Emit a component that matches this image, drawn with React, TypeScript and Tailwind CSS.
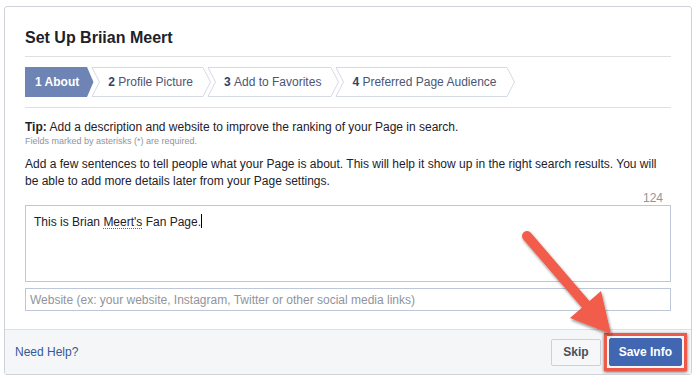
import React from "react";

const steps = [
  { n: "1", label: "About" },
  { n: "2", label: "Profile Picture" },
  { n: "3", label: "Add to Favorites" },
  { n: "4", label: "Preferred Page Audience" },
];

// chevron between two steps; the first one is filled when the step before is active
const Sep = ({ active, last }: { active?: boolean; last?: boolean }) => (
  <svg width={last ? 9 : 13} height="30" viewBox={last ? "0 0 9 30" : "0 0 13 30"} className="shrink-0 block">
    {active ? (
      <polygon points="0,0 6.5,15 0,30" fill="#6d84b4" />
    ) : (
      <polyline points="0,0.5 7.5,15 0,29.5" fill="none" stroke="#d5d9e3" />
    )}
    {!last && (
      <>
        <polyline points="5,0.5 12.5,15 5,29.5" fill="none" stroke="#d5d9e3" />
        <line x1="5" y1="0.5" x2="13" y2="0.5" stroke="#d5d9e3" />
        <line x1="5" y1="29.5" x2="13" y2="29.5" stroke="#d5d9e3" />
      </>
    )}
  </svg>
);

const Steps = () => (
  <div className="flex items-stretch h-[30px] text-[12px]">
    {steps.map((s, i) => {
      const active = i === 0;
      return (
        <React.Fragment key={s.n}>
          {active ? (
            <div className="flex items-center bg-[#6d84b4] text-white font-bold pl-[10px] pr-[8px]">
              {s.n} {s.label}
            </div>
          ) : (
            <div className="flex items-center border-y border-[#d5d9e3] text-[#4b5676] pl-[8px] pr-[10px] whitespace-nowrap">
              <span className="font-bold text-[#33406a]">{s.n}</span>&nbsp;{s.label}
            </div>
          )}
          <Sep active={active} last={i === steps.length - 1} />
        </React.Fragment>
      );
    })}
  </div>
);

const Arrow = () => (
  <svg className="absolute left-0 top-0 pointer-events-none" width="697" height="381">
    <defs>
      <filter id="sh" x="-20%" y="-20%" width="140%" height="140%">
        <feDropShadow dx="1" dy="2" stdDeviation="1.5" floodColor="#000" floodOpacity="0.45" />
      </filter>
    </defs>
    <g filter="url(#sh)">
      <line x1="527" y1="236" x2="588" y2="307" stroke="#f15b4c" strokeWidth="10" strokeLinecap="round" />
      <polygon points="570,318 601,291 611,334" fill="#f15b4c" />
    </g>
  </svg>
);

export default function App() {
  return (
    <div className="relative w-[697px] h-[381px] bg-white font-['Liberation_Sans',Arial,sans-serif] pt-[6px] pl-[4px]">
      <div className="w-[688px] h-[369px] border border-[#cfd2d8] rounded-[3px] bg-white flex flex-col overflow-hidden">
        <div className="px-[20px] flex-1">
          <div className="h-[50px] pt-[21px] border-b border-[#dddfe2]">
            <h1 className="text-[16px] leading-[20px] font-bold text-[#1d2129]">Set Up Briian Meert</h1>
          </div>
          <div className="py-[10px] border-b border-[#dddfe2]">
            <Steps />
          </div>
          <div className="pt-[11px] text-[12px] text-[#1d2129]">
            <p className="leading-[16px]">
              <span className="font-bold">Tip:</span> Add a description and website to improve the ranking of your Page in search.
            </p>
            <p className="text-[9px] leading-[12px] text-[#90949c]">Fields marked by asterisks (*) are required.</p>
            <p className="mt-[9px] leading-[17px]">
              Add a few sentences to tell people what your Page is about. This will help it show up in the right search results. You will be able to add more details later from your Page settings.
            </p>
            <div className="text-right text-[#90949c] leading-[14px] mt-[1px] pr-[8px]">124</div>
            <div className="h-[77px] border border-[#bdc7d8] px-[8px] pt-[8px] leading-[16px]">
              This is Brian{" "}
              <span className="underline decoration-dotted decoration-[#e0362f] underline-offset-2">Meert's</span> Fan Page.
              <span className="inline-block w-px h-[14px] bg-black align-[-2px]" />
            </div>
            <div className="mt-[6px] h-[23px] border border-[#bdc7d8] px-[4px] flex items-center text-[#90949c]">
              Website (ex: your website, Instagram, Twitter or other social media links)
            </div>
          </div>
        </div>
        <div className="h-[45px] shrink-0 bg-[#f5f6f7] border-t border-[#dddfe2] flex items-center pl-[10px] pr-[9px] text-[12px]">
          <a className="text-[#365899]">Need Help?</a>
          <div className="ml-auto flex items-center gap-[8px]">
            <button className="h-[27px] px-[11px] bg-[#f6f7f9] border border-[#ced0d4] rounded-[2px] text-[#4b4f56] font-bold">
              Skip
            </button>
            <div className="relative">
              <button className="h-[28px] px-[9px] bg-[#4267b2] border border-[#4267b2] rounded-[2px] text-white font-bold">
                Save Info
              </button>
              <div className="absolute -inset-[5px] border-[3px] border-[#ee5a4a] shadow-[0_1px_3px_rgba(0,0,0,0.6)]" />
            </div>
          </div>
        </div>
      </div>
      <Arrow />
    </div>
  );
}
